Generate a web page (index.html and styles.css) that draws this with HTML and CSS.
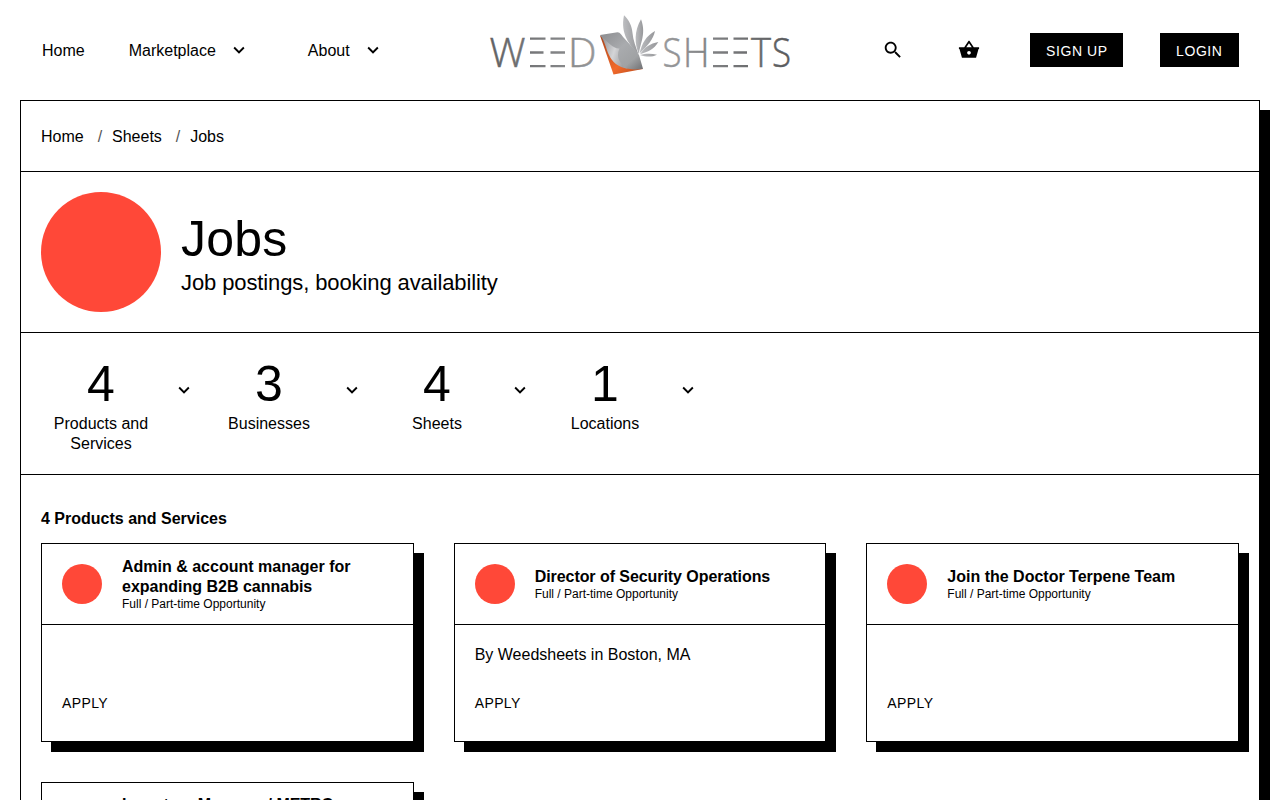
FILE: index.html
```html
<!DOCTYPE html>
<html lang="en">
<head>
<meta charset="utf-8">
<title>Jobs</title>
<link rel="stylesheet" href="styles.css">
</head>
<body>
<svg class="defs" aria-hidden="true">
  <symbol id="chevron" viewBox="0 0 24 24"><path d="M7.410 8.590 12 13.170l4.590-4.580L18 10l-6 6-6-6 1.410-1.410z"/></symbol>
</svg>
<header class="header">
  <nav class="nav">
    <a class="nav-home">Home</a>
    <a class="nav-market">Marketplace <svg class="chev"><use href="#chevron"/></svg></a>
    <a>About <svg class="chev"><use href="#chevron"/></svg></a>
  </nav>
  <svg class="logo" viewBox="488 12 308 66" width="308" height="66">
    <defs>
      <linearGradient id="word" gradientUnits="userSpaceOnUse" x1="490" y1="0" x2="790" y2="0">
        <stop offset="0" stop-color="#5f6062"/><stop offset=".36" stop-color="#98999b"/><stop offset=".58" stop-color="#98999b"/><stop offset="1" stop-color="#58595b"/>
      </linearGradient>
      <linearGradient id="page" x1="0" y1="0" x2="1" y2="1">
        <stop offset="0" stop-color="#8b8c8f"/><stop offset=".45" stop-color="#a9abae"/><stop offset=".75" stop-color="#a0a2a4"/><stop offset="1" stop-color="#6f7073"/>
      </linearGradient>
      <linearGradient id="curl" x1="0" y1="0" x2="1" y2=".4">
        <stop offset="0" stop-color="#85868a"/><stop offset=".6" stop-color="#d4d5d7"/><stop offset="1" stop-color="#a0a1a4"/>
      </linearGradient>
      <linearGradient id="orange" x1="0" y1="0" x2="1" y2="1">
        <stop offset="0" stop-color="#a8441c"/><stop offset=".6" stop-color="#f16a2b"/><stop offset="1" stop-color="#b54a1e"/>
      </linearGradient>
      <linearGradient id="leaf" x1="0" y1="0" x2="1" y2="0">
        <stop offset="0" stop-color="#bcbdc0"/><stop offset="1" stop-color="#96979a"/>
      </linearGradient>
    </defs>
    <g class="word" fill="url(#word)">
      <text x="489.500" y="67.300" textLength="36" lengthAdjust="spacingAndGlyphs">W</text>
      <text x="568" y="67.300" textLength="28.500" lengthAdjust="spacingAndGlyphs">D</text>
      <text x="662.500" y="67.300" textLength="19" lengthAdjust="spacingAndGlyphs">S</text>
      <text x="683" y="67.300" textLength="26.500" lengthAdjust="spacingAndGlyphs">H</text>
      <text x="751" y="67.300" textLength="20" lengthAdjust="spacingAndGlyphs">T</text>
      <text x="772" y="67.300" textLength="19" lengthAdjust="spacingAndGlyphs">S</text>
      <path d="M530 37.500h15.500v2.300H530zM530 51.300h13.500v2.500H530zM530 65h15.500v2.300H530zM550.500 37.500H565v2.300h-14.500zM550.500 51.300H565v2.500h-14.500zM550.500 65H565v2.300h-14.500zM713 37.500h15v2.300h-15zM713 51.300h15v2.500h-15zM713 65h15v2.300h-15zM733.500 37.500H748v2.300h-14.500zM733.500 51.300H747v2.500h-13.500zM733.500 65H748v2.300h-14.500z"/>
    </g>
    <g fill="url(#leaf)">
      <path d="M624 15.300C629 20 632 26 632.500 33C633 40 636 47 638.300 54C630 46 620 34 624 15.300Z"/>
      <path d="M641 19.300C644 27 643.500 34 642 40C640.500 46 639.500 49 638.800 54C634.500 44 634 31 641 19.300Z"/>
      <path d="M655 31C653 40 648 45 639.500 53.500C642 43 646 36 655 31Z"/>
      <path d="M658.300 42C654 49.500 648 51.500 640 54.300C645 47 650 43.500 658.300 42Z"/>
      <path d="M657 54.700C652 57.300 646 57 640 55C645 53.500 651 53.300 657 54.700Z"/>
    </g>
    <path fill="url(#orange)" d="M600 35.500 613.500 74.500 643 69 620 45Z"/>
    <path fill="url(#page)" d="M600 35 617.500 32.200C620.500 32.500 621.500 35 624 38C630 45 637 51 639 55L643 68.800C629 71 619 67 614 60C609 52 609 45 600 35Z"/>
    <path fill="url(#curl)" d="M600 35C605 41 606 49 609 55C612 62 618 67 628 69C621 65 615 58 619.500 48.500C613 49 608 42 600 35Z"/>
  </svg>
  <div class="actions">
    <svg class="icon" viewBox="0 0 24 24"><path d="M15.500 14h-.79l-.28-.27C15.410 12.590 16 11.110 16 9.500 16 5.910 13.090 3 9.500 3S3 5.910 3 9.500 5.910 16 9.500 16c1.610 0 3.090-.59 4.230-1.570l.27.28v.79l5 4.990L20.490 19l-4.990-5zm-6 0C7.010 14 5 11.990 5 9.500S7.010 5 9.500 5 14 7.010 14 9.500 11.990 14 9.500 14z"/></svg>
    <svg class="icon basket" viewBox="0 0 24 24"><path d="m17.210 9-4.380-6.560c-.19-.28-.51-.42-.83-.42-.32 0-.64.140-.83.430L6.790 9H1v2h.6l2.700 9.500h15.400l2.700-9.500H23V9h-5.790zM9 9l3-4.400L15 9H9zm3 8c-1.100 0-2-.9-2-2s.9-2 2-2 2 .9 2 2-.9 2-2 2z"/></svg>
    <a class="btn signup">SIGN UP</a>
    <a class="btn login">LOGIN</a>
  </div>
</header>
<main class="sheet">
  <div class="crumbs"><a>Home</a><i>/</i><a>Sheets</a><i>/</i><a>Jobs</a></div>
  <section class="hero">
    <span class="dot dot-lg"></span>
    <div><h1>Jobs</h1><p>Job postings, booking availability</p></div>
  </section>
  <section class="stats">
    <div class="stat"><div class="figure"><b>4</b><span>Products and Services</span></div><svg class="chev"><use href="#chevron"/></svg></div>
    <div class="stat"><div class="figure"><b>3</b><span>Businesses</span></div><svg class="chev"><use href="#chevron"/></svg></div>
    <div class="stat"><div class="figure"><b>4</b><span>Sheets</span></div><svg class="chev"><use href="#chevron"/></svg></div>
    <div class="stat"><div class="figure"><b>1</b><span>Locations</span></div><svg class="chev"><use href="#chevron"/></svg></div>
  </section>
  <section class="products">
    <h2>4 Products and Services</h2>
    <div class="cards">
      <article class="card">
        <div class="card-head"><span class="dot"></span><div><h3>Admin &amp; account manager for expanding B2B cannabis</h3><p>Full / Part-time Opportunity</p></div></div>
        <div class="card-body"><p></p><a class="apply">APPLY</a></div>
      </article>
      <article class="card">
        <div class="card-head"><span class="dot"></span><div><h3 class="tight">Director of Security Operations</h3><p>Full / Part-time Opportunity</p></div></div>
        <div class="card-body"><p>By Weedsheets in Boston, MA</p><a class="apply">APPLY</a></div>
      </article>
      <article class="card">
        <div class="card-head"><span class="dot"></span><div><h3>Join the Doctor Terpene Team</h3><p>Full / Part-time Opportunity</p></div></div>
        <div class="card-body"><p></p><a class="apply">APPLY</a></div>
      </article>
      <article class="card">
        <div class="card-head"><span class="dot"></span><div><h3 class="tight">Inventory Manager / METRC Compliance Specialist</h3><p>Full / Part-time Opportunity</p></div></div>
        <div class="card-body"><p></p><a class="apply">APPLY</a></div>
      </article>
    </div>
  </section>
</main>
</body>
</html>
```
FILE: styles.css
```css
* { box-sizing: border-box; margin: 0; padding: 0; }
html { height: 100%; overflow: hidden; }
body { height: 100%; overflow: hidden; background: #fff; color: #000; font: 16px/20px "Liberation Sans", Arial, sans-serif; }
.defs { display: none; }
.header { height: 100px; display: grid; grid-template-columns: 488px 308px 1fr; padding-right: 41px; }
.nav { display: flex; align-items: center; padding: 1px 0 0 42px; height: 100px; }
.nav a { display: flex; align-items: center; }
.nav-home { margin-right: 44px; }
.nav-market { margin-right: 58px; }
.chev { width: 22px; height: 22px; flex: none; }
.nav .chev { margin: -2px 0 0 12px; }
.logo { margin-top: 12px; }
.word text { font: 300 41px "Open Sans", sans-serif; stroke: url(#word); stroke-width: 0.5px; }
.actions { display: flex; align-items: center; justify-content: flex-end; height: 100px; }
.icon { width: 22px; height: 22px; }
.basket { margin: 0 50px 0 54px; }
.btn { height: 34px; padding-left: 16px; background: #000; color: #fff; font-size: 14px; line-height: 36px; white-space: nowrap; }
.signup { width: 93px; margin-right: 37px; letter-spacing: 0.6px; }
.login { width: 79px; letter-spacing: 0.6px; }
.sheet { width: 1240px; min-height: 1000px; margin-left: 20px; border: 1px solid #000; box-shadow: 10px 10px 0 #000; }
.crumbs { display: flex; height: 71px; padding: 26px 20px 0; border-bottom: 1px solid #000; }
.crumbs i { font-style: normal; color: #555; margin: 0 9.900px 0 14px; }
.hero { display: flex; align-items: center; gap: 20px; height: 161px; padding: 0 20px; border-bottom: 1px solid #000; }
.dot { width: 40px; height: 40px; border-radius: 50%; background: #ff4838; flex: none; }
.dot-lg { width: 120px; height: 120px; }
.hero h1 { font-size: 50px; line-height: 50px; font-weight: 400; letter-spacing: 0.2px; padding-top: 7px; }
.hero p { font-size: 22px; line-height: 28px; margin-top: 5px; letter-spacing: -0.11px; }
.stats { display: flex; gap: 14px; height: 142px; padding: 20px 20px 0; border-bottom: 1px solid #000; }
.stat { display: flex; width: 154px; }
.stat .chev { margin-top: 26px; }
.figure { flex: none; width: 120px; margin-right: 12px; text-align: center; padding: 6px 10px 0; }
.figure b { display: block; font-size: 50px; line-height: 50px; font-weight: 400; }
.figure span { display: block; margin-top: 5px; }
.products { padding: 34px 20px; }
.products h2 { font-size: 16px; line-height: 20px; margin-bottom: 14px; }
.cards { display: grid; grid-template-columns: repeat(3, 1fr); gap: 40.200px 40px; }
.card { height: 198.800px; border: 1px solid #000; background: #fff; box-shadow: 10px 10px 0 #000; }
.card-head { display: flex; align-items: center; gap: 20px; height: 81px; padding: 0 20px; border-bottom: 1px solid #000; }
.card h3 { font-size: 16px; line-height: 20px; }
.card h3.tight { letter-spacing: -0.06px; }
.card-head p { font-size: 12px; line-height: 15px; }
.card-body { padding: 20px; }
.card-body p { height: 20px; }
.apply { display: block; margin-top: 28px; font-size: 14px; letter-spacing: 0.4px; }
```
